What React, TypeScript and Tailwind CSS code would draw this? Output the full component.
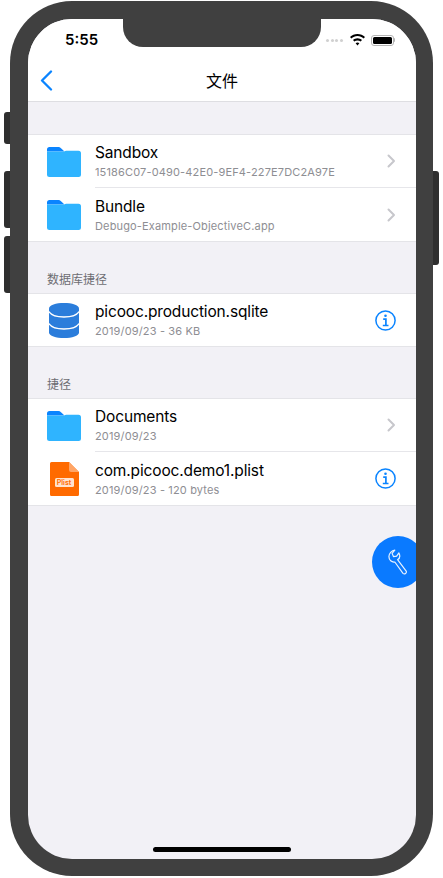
import React from "react";

const font = { fontFamily: 'Inter, "Noto Sans CJK SC", sans-serif' };

function Folder() {
  return (
    <svg width="34" height="30" viewBox="0 0 34 30" className="block">
      <path d="M0 2.5 A2.5 2.5 0 0 1 2.5 0 H11 A4 4 0 0 1 14 1.2 L17.5 4.5 H0 Z" fill="#0a84ff" />
      <path d="M0 4.5 H17 L19 3.8 H31.5 A2.5 2.5 0 0 1 34 6.3 V27.5 A2.5 2.5 0 0 1 31.5 30 H2.5 A2.5 2.5 0 0 1 0 27.5 Z" fill="#2fb4ff" />
    </svg>
  );
}

function Database() {
  return (
    <svg width="30" height="35" viewBox="0 0 30 35" className="block">
      <path d="M0 5.5 C0 2 7 0 15 0 S30 2 30 5.5 V29.5 C30 33 23 35 15 35 S0 33 0 29.5 Z" fill="#2b7ddb" />
      <path d="M0 8.5 C2 12.5 8 14 15 14 S28 12.5 30 8.5" fill="none" stroke="#fff" strokeWidth="1.3" />
      <path d="M0 20.5 C2 24.5 8 26 15 26 S28 24.5 30 20.5" fill="none" stroke="#fff" strokeWidth="1.3" />
    </svg>
  );
}

function Plist() {
  return (
    <div className="relative w-[29px] h-[34px]">
      <svg width="29" height="34" viewBox="0 0 29 34" className="block">
        <path d="M1.5 0 H19 L29 10 V32.5 A1.5 1.5 0 0 1 27.5 34 H1.5 A1.5 1.5 0 0 1 0 32.5 V1.5 A1.5 1.5 0 0 1 1.5 0 Z" fill="#ff6a00" />
        <path d="M19 0 L29 10 H21 A2 2 0 0 1 19 8 Z" fill="#ffa566" />
      </svg>
      <span className="absolute left-[5px] top-[16px] w-[19px] h-[9px] rounded-[1.5px] bg-[#ffe3cf] text-[#ff6a00] text-[7px] leading-[9px] text-center font-semibold">Plist</span>
    </div>
  );
}

function Chevron() {
  return (
    <svg width="9" height="14" viewBox="0 0 9 14" className="block" fill="none" stroke="#c7c7cc" strokeWidth="2" strokeLinecap="round" strokeLinejoin="round">
      <path d="M1.5 1.5 L7 7 L1.5 12.5" />
    </svg>
  );
}

function Info() {
  return (
    <svg width="21" height="21" viewBox="0 0 21 21" className="block" fill="none" stroke="#0a84ff">
      <circle cx="10.5" cy="10.5" r="9.6" strokeWidth="1.5" />
      <circle cx="10.5" cy="5.8" r="1.3" fill="#0a84ff" stroke="none" />
      <path d="M8.2 9.1 H10.9 V15.3 M7.8 15.5 H13.5" strokeWidth="1.7" />
    </svg>
  );
}

function Row({ icon, title, sub, accessory, separator }: { icon: React.ReactNode; title: string; sub: string; accessory: React.ReactNode; separator?: boolean }) {
  return (
    <div className="flex flex-1 min-h-0">
      <div className="w-[67px] shrink-0 pl-[19px] flex items-center">
        <div className="w-[34px] flex justify-center">{icon}</div>
      </div>
      <div className={`flex-1 min-w-0 flex items-center pr-[20px] ${separator ? "border-b border-[#e6e6ea]" : ""}`}>
        <div className="flex-1 min-w-0">
          <div className="text-[15.5px] leading-[20px] text-black tracking-[-0.15px]">{title}</div>
          <div className="mt-[2px] text-[11px] leading-[14px] text-[#8e8e93] tracking-[0.15px] whitespace-nowrap">{sub}</div>
        </div>
        {accessory}
      </div>
    </div>
  );
}

function Card({ tall, children }: { tall?: boolean; children: React.ReactNode }) {
  return <div className={`bg-white border-y border-[#e4e4e8] flex flex-col shrink-0 ${tall ? "h-[108px]" : "h-[54px]"}`}>{children}</div>;
}

function Header({ children }: { children: React.ReactNode }) {
  return <div className="h-[51px] shrink-0 pl-[19px] pb-[5px] flex items-end text-[12px] leading-[16px] text-[#6d6d72]">{children}</div>;
}

export default function App() {
  return (
    <div className="relative w-[443px] h-[878px] overflow-hidden bg-white" style={font}>
      <div className="absolute left-[4px] top-[112px] w-[7px] h-[32px] rounded-l-[3px] bg-[#2f2f2f]" />
      <div className="absolute left-[4px] top-[171px] w-[7px] h-[57px] rounded-l-[3px] bg-[#2f2f2f]" />
      <div className="absolute left-[4px] top-[236px] w-[7px] h-[57px] rounded-l-[3px] bg-[#2f2f2f]" />
      <div className="absolute left-[432px] top-[171px] w-[7px] h-[94px] rounded-r-[3px] bg-[#2f2f2f]" />

      <div className="relative mt-px ml-[10px] w-[423px] h-[875px] rounded-[62px] bg-[#404040] p-[18px]">
        <div className="relative w-[388px] h-[840px] rounded-[44px] overflow-hidden bg-[#f2f1f6] flex flex-col">
          <div className="h-[83px] shrink-0 bg-white border-b border-[#dedee2] flex flex-col">
            <div className="h-[41px] shrink-0 flex items-center justify-between pl-[37px] pr-[21px] pt-[1px]">
              <span className="text-[15px] font-semibold leading-[20px] text-black">5:55</span>
              <div className="flex items-center gap-[6px]">
                <div className="flex gap-[1.5px] mr-[1px]">
                  <i className="block w-[3px] h-[3px] rounded-full bg-[#d0d0d0]" />
                  <i className="block w-[3px] h-[3px] rounded-full bg-[#d0d0d0]" />
                  <i className="block w-[3px] h-[3px] rounded-full bg-[#d0d0d0]" />
                  <i className="block w-[3px] h-[3px] rounded-full bg-[#d0d0d0]" />
                </div>
                <svg width="15" height="12" viewBox="0 0 15 12" className="block">
                  <path d="M7.5 0 C10.4 0 13 1.1 15 3 L13.6 4.5 C12 3 9.9 2.1 7.5 2.1 S3 3 1.4 4.5 L0 3 C2 1.1 4.6 0 7.5 0 Z" fill="#000" />
                  <path d="M7.5 4.3 C9.2 4.3 10.8 5 12 6.1 L10.6 7.6 C9.8 6.8 8.7 6.4 7.5 6.4 S5.2 6.8 4.4 7.6 L3 6.1 C4.2 5 5.8 4.3 7.5 4.3 Z" fill="#000" />
                  <path d="M7.5 8.4 C8.2 8.4 8.9 8.7 9.4 9.2 L7.5 11.5 L5.6 9.2 C6.1 8.7 6.8 8.4 7.5 8.4 Z" fill="#000" />
                </svg>
                <div className="flex items-center">
                  <div className="w-[23px] h-[11px] rounded-[3px] border border-[#b5b5b5] p-[1px]">
                    <div className="w-full h-full rounded-[1.5px] bg-black" />
                  </div>
                  <div className="w-[1.5px] h-[4px] bg-[#b5b5b5] rounded-r-[1px]" />
                </div>
              </div>
            </div>
            <div className="relative flex-1 flex items-center justify-center">
              <svg width="13" height="21" viewBox="0 0 13 21" className="absolute left-[12px] top-[10px]" fill="none" stroke="#0a84ff" strokeWidth="2.3" strokeLinecap="round" strokeLinejoin="round">
                <path d="M11 1.5 L2 10.5 L11 19.5" />
              </svg>
              <span className="text-[16px] font-normal leading-[22px] text-black">文件</span>
            </div>
          </div>

          <div className="h-[32px] shrink-0" />
          <Card tall>
            <Row icon={<Folder />} title="Sandbox" sub="15186C07-0490-42E0-9EF4-227E7DC2A97E" accessory={<Chevron />} separator />
            <Row icon={<Folder />} title="Bundle" sub="Debugo-Example-ObjectiveC.app" accessory={<Chevron />} />
          </Card>
          <Header>数据库捷径</Header>
          <Card>
            <Row icon={<Database />} title="picooc.production.sqlite" sub="2019/09/23 - 36 KB" accessory={<Info />} />
          </Card>
          <Header>捷径</Header>
          <Card tall>
            <Row icon={<Folder />} title="Documents" sub="2019/09/23" accessory={<Chevron />} separator />
            <Row icon={<Plist />} title="com.picooc.demo1.plist" sub="2019/09/23 - 120 bytes" accessory={<Info />} />
          </Card>

          <div className="absolute left-[344px] top-[517px] w-[52px] h-[52px] rounded-full bg-[#0a7aff] flex items-center justify-start pl-[16px]">
            <svg width="20" height="26" viewBox="0 0 22 28" fill="none" stroke="#e8f2ff" strokeWidth="1.3" strokeLinejoin="round">
              <path d="M7.5 1 L4.5 4.5 L6 8 L9.5 7.5 L12 4 C13.5 7 13 10 10.5 11.5 L20 24 A2.2 2.2 0 0 1 16.5 26.5 L7.5 14 C4 14.5 1 12 1 8 C1 4.8 4 1.2 7.5 1 Z" />
            </svg>
          </div>

          <div className="absolute left-[125px] bottom-[7px] w-[138px] h-[5px] rounded-full bg-black" />
        </div>

        <div className="absolute left-[113px] top-0 w-[197.5px] h-[46px] pt-[18px]">
          <div className="w-full h-[28px] rounded-b-[20px] bg-[#404040]" />
        </div>
      </div>
    </div>
  );
}
